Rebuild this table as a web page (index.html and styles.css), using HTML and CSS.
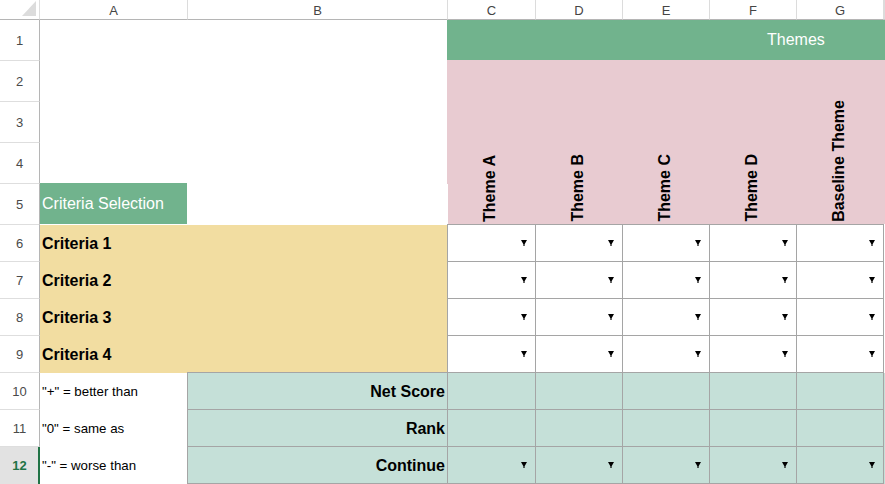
FILE: index.html
```html
<!DOCTYPE html>
<html lang="en">
<head>
<meta charset="utf-8">
<title>Criteria Selection</title>
<link rel="stylesheet" href="styles.css">
</head>
<body>
<div class="sheet">
  <div class="corner"><span class="tri"></span></div>
  <div class="ch">A</div>
  <div class="ch">B</div>
  <div class="ch">C</div>
  <div class="ch">D</div>
  <div class="ch">E</div>
  <div class="ch">F</div>
  <div class="ch">G</div>
  <div class="ch"></div>

  <div class="rh">1</div>
  <div class="blank c2 r4"></div>
  <div class="themes c6"><span>Themes</span></div>

  <div class="rh">2</div>
  <div class="lbl r4 first"><span>Theme A</span></div>
  <div class="lbl r4"><span>Theme B</span></div>
  <div class="lbl r4"><span>Theme C</span></div>
  <div class="lbl r4"><span>Theme D</span></div>
  <div class="lbl r4"><span>Baseline Theme</span></div>
  <div class="lbl r4"></div>

  <div class="rh">3</div>
  <div class="rh">4</div>

  <div class="rh">5</div>
  <div class="selhdr">Criteria Selection</div>
  <div class="blank"></div>

  <div class="rh">6</div>
  <div class="crit c2">Criteria 1</div>
  <div class="dd"><svg class="arr" viewBox="0 0 6 6"><path d="M0 0H6L3.6 4.2V6H2.4V4.2Z"/></svg></div>
  <div class="dd"><svg class="arr" viewBox="0 0 6 6"><path d="M0 0H6L3.6 4.2V6H2.4V4.2Z"/></svg></div>
  <div class="dd"><svg class="arr" viewBox="0 0 6 6"><path d="M0 0H6L3.6 4.2V6H2.4V4.2Z"/></svg></div>
  <div class="dd"><svg class="arr" viewBox="0 0 6 6"><path d="M0 0H6L3.6 4.2V6H2.4V4.2Z"/></svg></div>
  <div class="dd"><svg class="arr" viewBox="0 0 6 6"><path d="M0 0H6L3.6 4.2V6H2.4V4.2Z"/></svg></div>
  <div class="blank"></div>

  <div class="rh">7</div>
  <div class="crit c2">Criteria 2</div>
  <div class="dd"><svg class="arr" viewBox="0 0 6 6"><path d="M0 0H6L3.6 4.2V6H2.4V4.2Z"/></svg></div>
  <div class="dd"><svg class="arr" viewBox="0 0 6 6"><path d="M0 0H6L3.6 4.2V6H2.4V4.2Z"/></svg></div>
  <div class="dd"><svg class="arr" viewBox="0 0 6 6"><path d="M0 0H6L3.6 4.2V6H2.4V4.2Z"/></svg></div>
  <div class="dd"><svg class="arr" viewBox="0 0 6 6"><path d="M0 0H6L3.6 4.2V6H2.4V4.2Z"/></svg></div>
  <div class="dd"><svg class="arr" viewBox="0 0 6 6"><path d="M0 0H6L3.6 4.2V6H2.4V4.2Z"/></svg></div>
  <div class="blank"></div>

  <div class="rh">8</div>
  <div class="crit c2">Criteria 3</div>
  <div class="dd"><svg class="arr" viewBox="0 0 6 6"><path d="M0 0H6L3.6 4.2V6H2.4V4.2Z"/></svg></div>
  <div class="dd"><svg class="arr" viewBox="0 0 6 6"><path d="M0 0H6L3.6 4.2V6H2.4V4.2Z"/></svg></div>
  <div class="dd"><svg class="arr" viewBox="0 0 6 6"><path d="M0 0H6L3.6 4.2V6H2.4V4.2Z"/></svg></div>
  <div class="dd"><svg class="arr" viewBox="0 0 6 6"><path d="M0 0H6L3.6 4.2V6H2.4V4.2Z"/></svg></div>
  <div class="dd"><svg class="arr" viewBox="0 0 6 6"><path d="M0 0H6L3.6 4.2V6H2.4V4.2Z"/></svg></div>
  <div class="blank"></div>

  <div class="rh">9</div>
  <div class="crit c2">Criteria 4</div>
  <div class="dd"><svg class="arr" viewBox="0 0 6 6"><path d="M0 0H6L3.6 4.2V6H2.4V4.2Z"/></svg></div>
  <div class="dd"><svg class="arr" viewBox="0 0 6 6"><path d="M0 0H6L3.6 4.2V6H2.4V4.2Z"/></svg></div>
  <div class="dd"><svg class="arr" viewBox="0 0 6 6"><path d="M0 0H6L3.6 4.2V6H2.4V4.2Z"/></svg></div>
  <div class="dd"><svg class="arr" viewBox="0 0 6 6"><path d="M0 0H6L3.6 4.2V6H2.4V4.2Z"/></svg></div>
  <div class="dd"><svg class="arr" viewBox="0 0 6 6"><path d="M0 0H6L3.6 4.2V6H2.4V4.2Z"/></svg></div>
  <div class="blank"></div>

  <div class="rh">10</div>
  <div class="note">"+" = better than</div>
  <div class="tl lab">Net Score</div>
  <div class="tl"></div>
  <div class="tl"></div>
  <div class="tl"></div>
  <div class="tl"></div>
  <div class="tl"></div>
  <div class="teal"></div>

  <div class="rh">11</div>
  <div class="note">"0" = same as</div>
  <div class="tl lab">Rank</div>
  <div class="tl"></div>
  <div class="tl"></div>
  <div class="tl"></div>
  <div class="tl"></div>
  <div class="tl"></div>
  <div class="teal"></div>

  <div class="rh sel">12</div>
  <div class="note">"-" = worse than</div>
  <div class="tl lab">Continue</div>
  <div class="tl"><svg class="arr" viewBox="0 0 6 6"><path d="M0 0H6L3.6 4.2V6H2.4V4.2Z"/></svg></div>
  <div class="tl"><svg class="arr" viewBox="0 0 6 6"><path d="M0 0H6L3.6 4.2V6H2.4V4.2Z"/></svg></div>
  <div class="tl"><svg class="arr" viewBox="0 0 6 6"><path d="M0 0H6L3.6 4.2V6H2.4V4.2Z"/></svg></div>
  <div class="tl"><svg class="arr" viewBox="0 0 6 6"><path d="M0 0H6L3.6 4.2V6H2.4V4.2Z"/></svg></div>
  <div class="tl"><svg class="arr" viewBox="0 0 6 6"><path d="M0 0H6L3.6 4.2V6H2.4V4.2Z"/></svg></div>
  <div class="teal"></div>
</div>
</body>
</html>
```

FILE: styles.css
```css
* { box-sizing: border-box; }

html, body {
  margin: 0;
  padding: 0;
  background: #ffffff;
  overflow: hidden;
  width: 885px;
  height: 484px;
}

body {
  font-family: "Liberation Sans", Arial, sans-serif;
  color: #000;
}

.sheet {
  display: grid;
  width: 885px;
  grid-template-columns: 40px 148px 260px 88px 87px 87px 87px 87px 1px;
  grid-template-rows: 20px 41px 41px 41px 41px 41px 37px 37px 37px 37px 37px 37px 37px;
}

.c2 { grid-column: span 2; }
.c6 { grid-column: span 6; }
.r4 { grid-row: span 4; }

/* headers */
.corner {
  display: flex;
  justify-content: flex-end;
  align-items: flex-end;
  padding: 0 3px 3px 0;
  border-right: 1px solid #dedede;
  border-bottom: 1px solid #b5b5b5;
}
.tri {
  width: 14px;
  height: 15px;
  background: #dcdcdc;
  clip-path: polygon(100% 0, 100% 100%, 0 100%);
}

.ch {
  display: flex;
  align-items: center;
  justify-content: center;
  font-size: 13px;
  color: #454545;
  border-right: 1px solid #dcdcdc;
  border-bottom: 1px solid #b5b5b5;
  padding-top: 1px;
}

.rh {
  display: flex;
  align-items: center;
  justify-content: center;
  font-size: 13px;
  color: #4a4a4a;
  border-right: 1px solid #b5b5b5;
  border-bottom: 1px solid #dedede;
  background: #fff;
}
.rh.sel {
  background: #e2e2e2;
  color: #217346;
  font-weight: bold;
  border-right: 2px solid #217346;
  border-bottom: none;
  padding-left: 1px;
}

.blank { background: #fff; }

/* Themes banner */
.themes {
  background: #71b38d;
  color: #fff;
  font-size: 16px;
  display: flex;
  align-items: center;
  padding-left: 320px;
  margin: 0 0 1px -1px;
  white-space: nowrap;
  overflow: hidden;
}

.lbl {
  background: #e8cbd1;
  display: flex;
  flex-direction: column;
  justify-content: flex-end;
  align-items: center;
  padding-bottom: 2px;
  margin: -1px 0 1px 0;
}
.lbl.first { margin-left: -1px; }
.lbl span {
  writing-mode: vertical-rl;
  transform: rotate(180deg);
  font-size: 16px;
  font-weight: bold;
  line-height: 18px;
  padding-left: 4px;
  white-space: nowrap;
}

.selhdr {
  background: #71b38d;
  color: #fff;
  font-size: 16px;
  display: flex;
  align-items: center;
  padding-left: 2px;
  margin: -1px 1px 1px 0;
}

.crit {
  background: #f2dda1;
  font-size: 16px;
  font-weight: bold;
  display: flex;
  align-items: center;
  padding-left: 2px;
  padding-top: 1px;
}

.dd, .tl {
  margin: -1px 0 0 -1px;
  border: 1px solid #a5a5a5;
  display: flex;
  align-items: center;
  justify-content: flex-end;
  padding-right: 8px;
}
.dd { background: #fff; }
.tl { background: #c5e0d8; }
.tl.lab {
  font-size: 16px;
  font-weight: bold;
  padding-right: 2px;
  padding-top: 1px;
}
.teal { background: #c5e0d8; }

.arr {
  width: 6px;
  height: 6px;
  fill: #000;
  display: block;
}

.note {
  display: flex;
  align-items: center;
  font-size: 13.3px;
  padding-left: 2px;
  background: #fff;
}
```
